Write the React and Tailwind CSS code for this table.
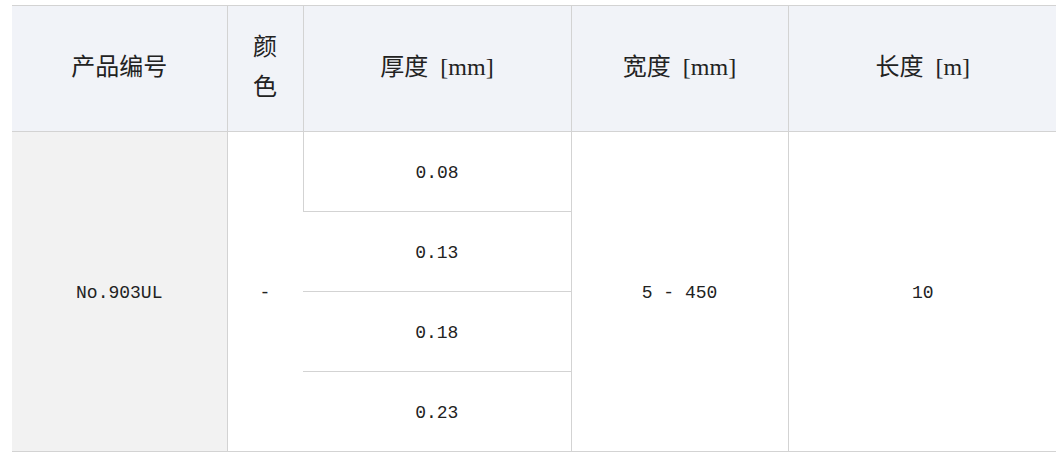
import React from "react";

const thicknesses = ["0.08", "0.13", "0.18", "0.23"];

const App = () => {
  const head =
    "bg-[#f1f3f8] border-t border-b border-r border-[#d3d3d3] h-[126px] pb-1 text-center align-middle font-normal text-[24px] leading-[40px] text-[#222]";
  const body =
    "text-center align-middle pt-1 text-[18px] text-[#222] font-['Liberation_Mono',monospace]";

  return (
    <div className="w-[1056px] h-[457px] overflow-hidden bg-white pt-[5px] pl-3 font-['Liberation_Serif','Noto_Sans_CJK_SC',serif]">
      <table className="table-fixed border-collapse w-[1045px]">
        <colgroup>
          <col className="w-[215px]" />
          <col className="w-[76px]" />
          <col className="w-[268px]" />
          <col className="w-[217px]" />
          <col className="w-[269px]" />
        </colgroup>
        <thead>
          <tr>
            <th className={head}>产品编号</th>
            <th className={`${head} px-6`}>颜色</th>
            <th className={head}>厚度{"\u2002"}[mm]</th>
            <th className={head}>宽度{"\u2002"}[mm]</th>
            <th className={`${head} border-r-0`}>长度{"\u2002"}[m]</th>
          </tr>
        </thead>
        <tbody>
          {thicknesses.map((t, i) => (
            <tr key={t} className="h-[80px]">
              {i === 0 && (
                <>
                  <td rowSpan={4} className={`${body} bg-[#f2f2f2] border-b border-r border-[#d3d3d3]`}>
                    No.903UL
                  </td>
                  <td rowSpan={4} className={`${body} border-b border-[#d3d3d3]`}>
                    -
                  </td>
                </>
              )}
              <td
                className={`${body} border-b border-r border-[#d3d3d3] ${i === 0 ? "border-l" : ""}`}
              >
                {t}
              </td>
              {i === 0 && (
                <>
                  <td rowSpan={4} className={`${body} border-b border-r border-[#d3d3d3]`}>
                    5 - 450
                  </td>
                  <td rowSpan={4} className={`${body} border-b border-[#d3d3d3]`}>
                    10
                  </td>
                </>
              )}
            </tr>
          ))}
        </tbody>
      </table>
    </div>
  );
};

export default App;
